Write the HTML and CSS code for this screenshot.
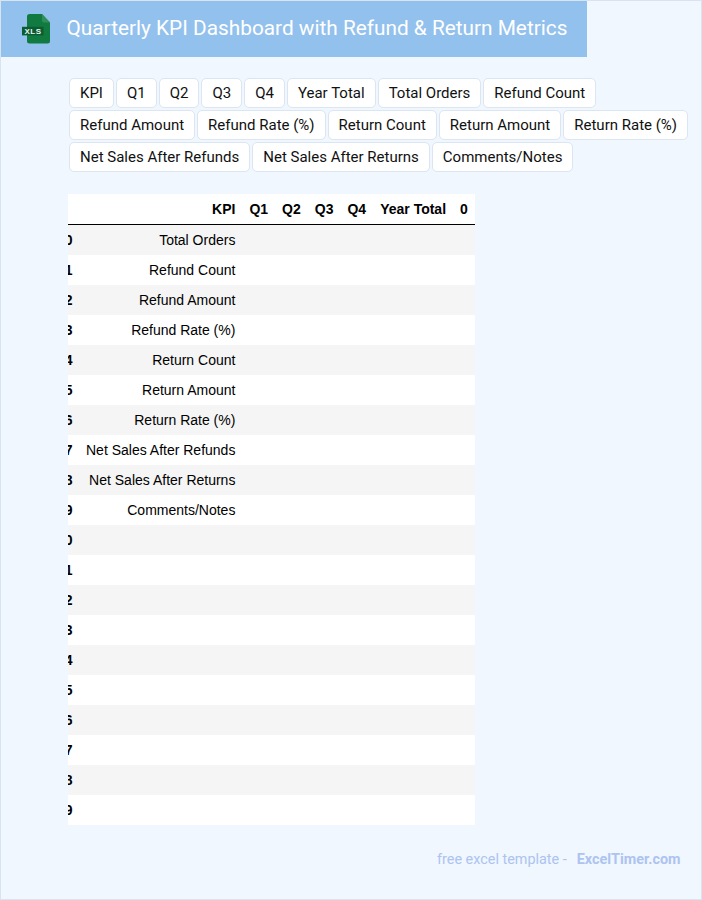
FILE: index.html
```html
<!DOCTYPE html>
<html lang="en">
<head>
<meta charset="utf-8">
<title>Quarterly KPI Dashboard with Refund &amp; Return Metrics</title>
<link rel="stylesheet" href="styles.css">
</head>
<body>
<div class="page">
  <header class="banner">
    <svg class="logo" viewBox="0 0 28 30" width="28" height="30" aria-hidden="true">
      <path d="M7.500 0H20L28 8.500V27A2.500 2.500 0 0 1 25.500 29.500H7.500A2.500 2.500 0 0 1 5 27V2.500A2.500 2.500 0 0 1 7.500 0Z" fill="#107a41"/>
      <path d="M20 0L28 8.500H22A2 2 0 0 1 20 6.500Z" fill="#2f8f5b"/>
      <rect x="0" y="12.800" width="21.500" height="8.600" fill="#0a5c33"/>
      <text x="11" y="20" class="logo-text" text-anchor="middle">XLS</text>
    </svg>
    <h1 class="title">Quarterly KPI Dashboard with Refund &amp; Return Metrics</h1>
  </header>
  <nav class="chips">
    <span class="chip">KPI</span><span class="chip">Q1</span><span class="chip">Q2</span><span class="chip">Q3</span><span class="chip">Q4</span><span class="chip">Year Total</span><span class="chip">Total Orders</span><span class="chip">Refund Count</span><span class="chip">Refund Amount</span><span class="chip">Refund Rate (%)</span><span class="chip">Return Count</span><span class="chip">Return Amount</span><span class="chip">Return Rate (%)</span><span class="chip">Net Sales After Refunds</span><span class="chip">Net Sales After Returns</span><span class="chip">Comments/Notes</span>
  </nav>
  <div class="table-clip">
    <table class="data">
      <thead>
        <tr><th></th><th>KPI</th><th>Q1</th><th>Q2</th><th>Q3</th><th>Q4</th><th>Year Total</th><th>0</th></tr>
      </thead>
      <tbody>
        <tr><th>0</th><td>Total Orders</td><td></td><td></td><td></td><td></td><td></td><td></td></tr>
        <tr><th>1</th><td>Refund Count</td><td></td><td></td><td></td><td></td><td></td><td></td></tr>
        <tr><th>2</th><td>Refund Amount</td><td></td><td></td><td></td><td></td><td></td><td></td></tr>
        <tr><th>3</th><td>Refund Rate (%)</td><td></td><td></td><td></td><td></td><td></td><td></td></tr>
        <tr><th>4</th><td>Return Count</td><td></td><td></td><td></td><td></td><td></td><td></td></tr>
        <tr><th>5</th><td>Return Amount</td><td></td><td></td><td></td><td></td><td></td><td></td></tr>
        <tr><th>6</th><td>Return Rate (%)</td><td></td><td></td><td></td><td></td><td></td><td></td></tr>
        <tr><th>7</th><td>Net Sales After Refunds</td><td></td><td></td><td></td><td></td><td></td><td></td></tr>
        <tr><th>8</th><td>Net Sales After Returns</td><td></td><td></td><td></td><td></td><td></td><td></td></tr>
        <tr><th>9</th><td>Comments/Notes</td><td></td><td></td><td></td><td></td><td></td><td></td></tr>
        <tr><th>10</th><td></td><td></td><td></td><td></td><td></td><td></td><td></td></tr>
        <tr><th>11</th><td></td><td></td><td></td><td></td><td></td><td></td><td></td></tr>
        <tr><th>12</th><td></td><td></td><td></td><td></td><td></td><td></td><td></td></tr>
        <tr><th>13</th><td></td><td></td><td></td><td></td><td></td><td></td><td></td></tr>
        <tr><th>14</th><td></td><td></td><td></td><td></td><td></td><td></td><td></td></tr>
        <tr><th>15</th><td></td><td></td><td></td><td></td><td></td><td></td><td></td></tr>
        <tr><th>16</th><td></td><td></td><td></td><td></td><td></td><td></td><td></td></tr>
        <tr><th>17</th><td></td><td></td><td></td><td></td><td></td><td></td><td></td></tr>
        <tr><th>18</th><td></td><td></td><td></td><td></td><td></td><td></td><td></td></tr>
        <tr><th>19</th><td></td><td></td><td></td><td></td><td></td><td></td><td></td></tr>
      </tbody>
    </table>
  </div>
  <footer class="credit">
    <span class="credit-label">free excel template -</span>
    <span class="credit-site">ExcelTimer.com</span>
  </footer>
</div>
</body>
</html>
```
FILE: styles.css
```css
html, body {
  margin: 0;
  padding: 0;
}
body {
  background: #f0f7ff;
  font-family: "Roboto", "Liberation Sans", sans-serif;
}
.page {
  box-sizing: border-box;
  height: 900px;
  border: 1px solid #d9e4f0;
  display: flex;
  flex-direction: column;
}
.banner {
  box-sizing: border-box;
  width: 586px;
  height: 56px;
  background: #93c1ed;
  display: flex;
  align-items: center;
  padding-left: 21px;
  gap: 16.500px;
}
.logo {
  flex: none;
}
.logo-text {
  font-family: "Liberation Sans", sans-serif;
  font-size: 8px;
  font-weight: 700;
  fill: #e8f3ec;
  letter-spacing: 0.500px;
}
.title {
  margin: 0 0 2px;
  font-size: 20.800px;
  font-weight: 400;
  color: #fff;
  white-space: nowrap;
}
.chips {
  display: flex;
  flex-wrap: wrap;
  gap: 2px;
  padding: 21px 0 0 68px;
}
.chip {
  box-sizing: border-box;
  height: 30px;
  line-height: 28px;
  padding: 0 10px;
  background: #fff;
  border: 1px solid #dbe6f2;
  border-radius: 5px;
  font-size: 15px;
  color: #111;
  white-space: nowrap;
}
.table-clip {
  margin: 22px 0 0 67px;
  width: 408px;
  overflow: hidden;
}
.data {
  margin-left: -18.600px;
  border-collapse: collapse;
  background: #fff;
  font-family: "Liberation Sans", Arial, sans-serif;
  font-size: 14px;
  line-height: 16px;
  color: #000;
}
.data th,
.data td {
  padding: 7px;
  text-align: right;
  height: 16px;
  white-space: nowrap;
}
.data th {
  font-weight: 700;
}
.data tr > th:first-child {
  padding-left: 7.500px;
  padding-right: 6.500px;
}
.data thead tr {
  border-bottom: 1px solid #000;
}
.data tbody tr:nth-child(odd) {
  background: #f5f5f5;
}
.credit {
  margin-top: 26px;
  display: flex;
  justify-content: flex-end;
  gap: 10px;
  padding-right: 20.500px;
  font-size: 14.400px;
  line-height: 18px;
  color: #adc3f0;
}
.credit-site {
  font-weight: 700;
}
```
